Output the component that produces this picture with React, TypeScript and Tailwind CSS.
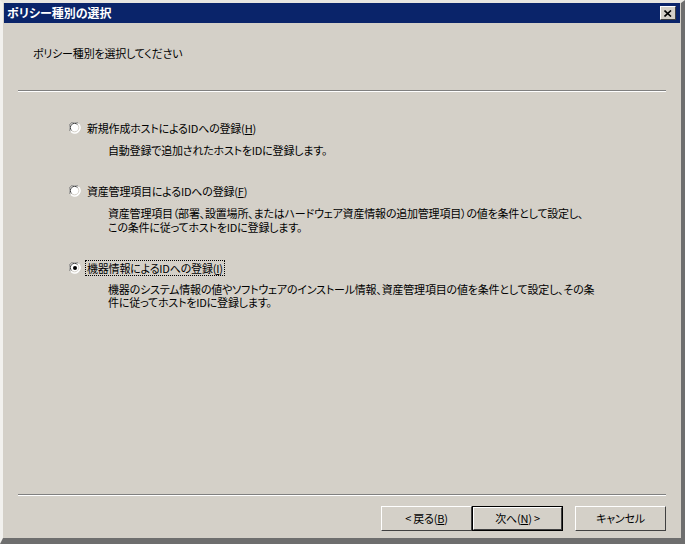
const font = { fontFamily: '"Noto Sans CJK JP", "Noto Sans", sans-serif' };

function Radio({ checked }: { checked?: boolean }) {
    return (
        <svg width="12" height="12" viewBox="0 0 12 12" className="shrink-0">
            <circle cx="6" cy="6" r="5.5" fill="#ffffff" />
            <path d="M1.5 9.5 A5 5 0 0 1 9.5 1.5" stroke="#808080" strokeWidth="1" fill="none" />
            <path d="M9.5 1.5 A5 5 0 0 1 1.5 9.5" stroke="#ffffff" strokeWidth="1" fill="none" />
            <path d="M2.6 8.6 A3.8 3.8 0 0 1 8.6 2.6" stroke="#404040" strokeWidth="1" fill="none" />
            <path d="M8.6 2.6 A3.8 3.8 0 0 1 2.6 8.6" stroke="#d4d0c8" strokeWidth="1" fill="none" />
            {checked && <circle cx="6" cy="6" r="2" fill="#000000" />}
        </svg>
    );
}

function Option({ label, mnemonic, desc, checked }: { label: string; mnemonic: string; desc: string[]; checked?: boolean }) {
    return (
        <div className="flex flex-col">
            <div className="flex items-center h-[16px] pl-[66px] gap-[4px]">
                <Radio checked={checked} />
                <span className={checked ? "border border-dotted border-black px-[1px] leading-[14px]" : "px-[2px] leading-[16px]"}>
                    {label}(<span className="underline">{mnemonic}</span>)
                </span>
            </div>
            <div className={"pl-[105px] mt-[7px] " + (checked ? "leading-[13px]" : "leading-[14px]")}>
                {desc.map((d) => (
                    <div key={d}>{d}</div>
                ))}
            </div>
        </div>
    );
}

function Button({ children, primary }: { children: React.ReactNode; primary?: boolean }) {
    return (
        <div className={"w-[91px] h-[25px] " + (primary ? "border border-black" : "")}>
            <div className="w-full h-full border-t border-l border-white border-r border-b border-r-[#404040] border-b-[#404040] bg-[#d4d0c8] flex items-center justify-center">
                {children}
            </div>
        </div>
    );
}

export default function App() {
    return (
        <div style={font} className="w-[685px] h-[544px] bg-[#d4d0c8] text-black text-[11px] tracking-[-0.2px] [font-feature-settings:'palt'] border-t-[3px] border-l-[3px] border-t-[#e8e6e1] border-l-[#f2f1ee] border-r-[4px] border-b-[6px] border-r-[#6e6e6e] border-b-[#6e6e6e] flex flex-col">
            <div className="h-[20px] mx-[1px] bg-[#0a246a] flex items-center justify-between pl-[3px] pr-[4px]">
                <span className="text-white font-bold text-[12px] tracking-normal">ポリシー種別の選択</span>
                <div className="w-[16px] h-[14px] bg-[#d4d0c8] border-t border-l border-white border-r border-b border-r-[#404040] border-b-[#404040] flex items-center justify-center">
                    <svg width="8" height="7" viewBox="0 0 8 7">
                        <path d="M0.5 0.5 L7 6.5 M7 0.5 L0.5 6.5" stroke="#000" strokeWidth="1.6" />
                    </svg>
                </div>
            </div>
            <div className="h-[67px] pl-[30px] pt-[22px] leading-[16px]">ポリシー種別を選択してください</div>
            <div className="mx-[15px] border-t border-[#808080] border-b border-b-white" />
            <div className="flex-1 flex flex-col pt-[28px] gap-[26px]">
                <Option
                    label="新規作成ホストによるIDへの登録"
                    mnemonic="H"
                    desc={["自動登録で追加されたホストをIDに登録します。"]}
                />
                <Option
                    label="資産管理項目によるIDへの登録"
                    mnemonic="F"
                    desc={[
                        "資産管理項目（部署、設置場所、またはハードウェア資産情報の追加管理項目）の値を条件として設定し、",
                        "この条件に従ってホストをIDに登録します。",
                    ]}
                />
                <Option
                    label="機器情報によるIDへの登録"
                    mnemonic="I"
                    checked
                    desc={[
                        "機器のシステム情報の値やソフトウェアのインストール情報、資産管理項目の値を条件として設定し、その条",
                        "件に従ってホストをIDに登録します。",
                    ]}
                />
            </div>
            <div className="mx-[15px] border-t border-[#808080] border-b border-b-white" />
            <div className="h-[42px] flex items-start justify-end pt-[10px] pr-[15px]">
                <Button>
                    &lt; 戻る(<span className="underline">B</span>)
                </Button>
                <Button primary>
                    次へ(<span className="underline">N</span>) &gt;
                </Button>
                <div className="w-[12px]" />
                <Button>キャンセル</Button>
            </div>
        </div>
    );
}
